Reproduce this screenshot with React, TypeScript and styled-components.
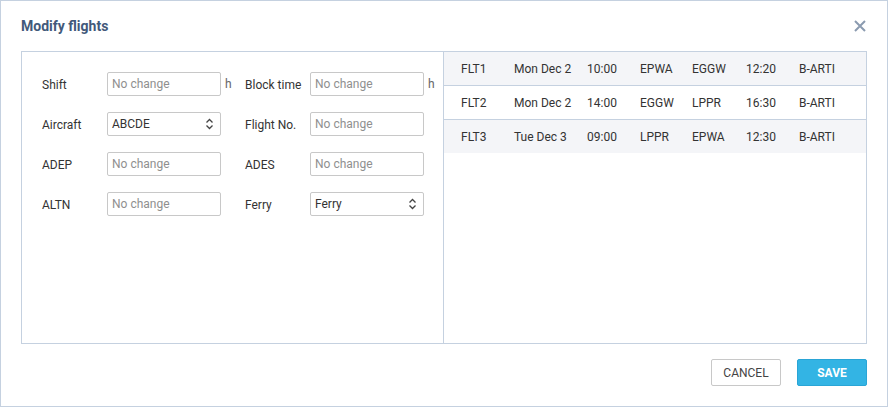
import React from 'react';
import styled, { createGlobalStyle } from 'styled-components';

const GlobalStyle = createGlobalStyle`
  html, body {
    margin: 0;
    padding: 0;
    background: #fff;
  }
  * {
    box-sizing: border-box;
  }
`;

const flights = [
  { id: 'FLT1', date: 'Mon Dec 2', std: '10:00', adep: 'EPWA', ades: 'EGGW', sta: '12:20', reg: 'B-ARTI' },
  { id: 'FLT2', date: 'Mon Dec 2', std: '14:00', adep: 'EGGW', ades: 'LPPR', sta: '16:30', reg: 'B-ARTI' },
  { id: 'FLT3', date: 'Tue Dec 3', std: '09:00', adep: 'LPPR', ades: 'EPWA', sta: '12:30', reg: 'B-ARTI' },
];

const Chevrons = () => (
  <svg width="9" height="12" viewBox="0 0 9 12" fill="none">
    <path d="M1.5 4.5 L4.5 1.5 L7.5 4.5" stroke="#444" strokeWidth="1.3" />
    <path d="M1.5 7.5 L4.5 10.5 L7.5 7.5" stroke="#444" strokeWidth="1.3" />
  </svg>
);

const CloseIcon = () => (
  <svg width="12" height="12" viewBox="0 0 12 12">
    <path d="M1 1 L11 11 M11 1 L1 11" stroke="#8b9bb0" strokeWidth="2" />
  </svg>
);

export default function App() {
  return (
    <>
      <GlobalStyle />
      <Dialog>
        <Header>
          <Title>Modify flights</Title>
          <CloseButton>
            <CloseIcon />
          </CloseButton>
        </Header>
        <Body>
          <Panel>
            <FormPane>
              <FormGrid>
                <Label>Shift</Label>
                <Input placeholder="No change" />
                <Suffix>h</Suffix>
                <Label>Block time</Label>
                <Input placeholder="No change" />
                <Suffix>h</Suffix>

                <Label>Aircraft</Label>
                <Select>
                  <span>ABCDE</span>
                  <Chevrons />
                </Select>
                <Suffix />
                <Label>Flight No.</Label>
                <Input placeholder="No change" />
                <Suffix />

                <Label>ADEP</Label>
                <Input placeholder="No change" />
                <Suffix />
                <Label>ADES</Label>
                <Input placeholder="No change" />
                <Suffix />

                <Label>ALTN</Label>
                <Input placeholder="No change" />
                <Suffix />
                <Label>Ferry</Label>
                <Select>
                  <span>Ferry</span>
                  <Chevrons />
                </Select>
                <Suffix />
              </FormGrid>
            </FormPane>
            <ListPane>
              {flights.map((f, i) => (
                <FlightRow key={f.id} $striped={i % 2 === 0}>
                  <Cell>{f.id}</Cell>
                  <Cell>{f.date}</Cell>
                  <Cell>{f.std}</Cell>
                  <Cell>{f.adep}</Cell>
                  <Cell>{f.ades}</Cell>
                  <Cell>{f.sta}</Cell>
                  <Cell>{f.reg}</Cell>
                </FlightRow>
              ))}
            </ListPane>
          </Panel>
        </Body>
        <Footer>
          <Button>CANCEL</Button>
          <Button $primary>SAVE</Button>
        </Footer>
      </Dialog>
    </>
  );
}

const Dialog = styled.div`
  width: 888px;
  height: 407px;
  border: 1px solid #c5d1e0;
  background: #fff;
  display: flex;
  flex-direction: column;
  font-family: Roboto, 'Liberation Sans', Arial, sans-serif;
  font-size: 12px;
  color: #333;
`;

const Header = styled.div`
  height: 50px;
  display: flex;
  align-items: center;
  justify-content: space-between;
  padding: 0 20px 0 20px;
`;

const Title = styled.h1`
  margin: 0;
  font-size: 14px;
  font-weight: 700;
  color: #42597a;
`;

const CloseButton = styled.button`
  border: none;
  background: none;
  padding: 0;
  margin-right: 1px;
  display: flex;
  cursor: pointer;
`;

const Body = styled.div`
  padding: 0 20px;
`;

const Panel = styled.div`
  height: 293px;
  border: 1px solid #c5d1e0;
  display: flex;
`;

const FormPane = styled.div`
  width: 422px;
  border-right: 1px solid #c5d1e0;
  padding: 20px 0 0 20px;
`;

const FormGrid = styled.div`
  display: grid;
  grid-template-columns: 65px 114px 24px 65px 114px 12px;
  row-gap: 16px;
  align-items: center;
`;

const Label = styled.label`
  font-size: 12px;
  color: #333;
  padding-top: 2px;
`;

const Input = styled.input`
  height: 24px;
  width: 114px;
  border: 1px solid #c8c8c8;
  border-radius: 2px;
  padding: 0 4px;
  font-family: inherit;
  font-size: 12px;
  color: #333;
  outline: none;
  &::placeholder {
    color: #8f8f8f;
  }
`;

const Select = styled.div`
  height: 24px;
  border: 1px solid #c8c8c8;
  border-radius: 2px;
  padding: 0 6px 0 4px;
  display: flex;
  align-items: center;
  justify-content: space-between;
  color: #333;
`;

const Suffix = styled.span`
  color: #666;
  padding-left: 4px;
`;

const ListPane = styled.div`
  flex: 1;
  display: flex;
  flex-direction: column;
`;

const FlightRow = styled.div<{ $striped: boolean }>`
  height: 34px;
  display: grid;
  grid-template-columns: 53px 73px 53px 52px 54px 53px 1fr;
  align-items: center;
  padding-left: 17px;
  background: ${(p) => (p.$striped ? '#f4f5f8' : '#fff')};
  border-bottom: 1px solid #c5d1e0;
  &:last-child {
    border-bottom: none;
    height: 33px;
  }
`;

const Cell = styled.span`
  white-space: nowrap;
  color: #333;
`;

const Footer = styled.div`
  flex: 1;
  display: flex;
  justify-content: flex-end;
  align-items: flex-start;
  gap: 16px;
  padding: 15px 20px 0;
`;

const Button = styled.button<{ $primary?: boolean }>`
  width: 70px;
  height: 27px;
  border-radius: 2px;
  font-family: inherit;
  font-size: 12px;
  cursor: pointer;
  border: 1px solid ${(p) => (p.$primary ? '#2aa5d6' : '#c8c8c8')};
  background: ${(p) => (p.$primary ? '#33b4e4' : '#fff')};
  color: ${(p) => (p.$primary ? '#fff' : '#444')};
  font-weight: ${(p) => (p.$primary ? 700 : 400)};
`;
